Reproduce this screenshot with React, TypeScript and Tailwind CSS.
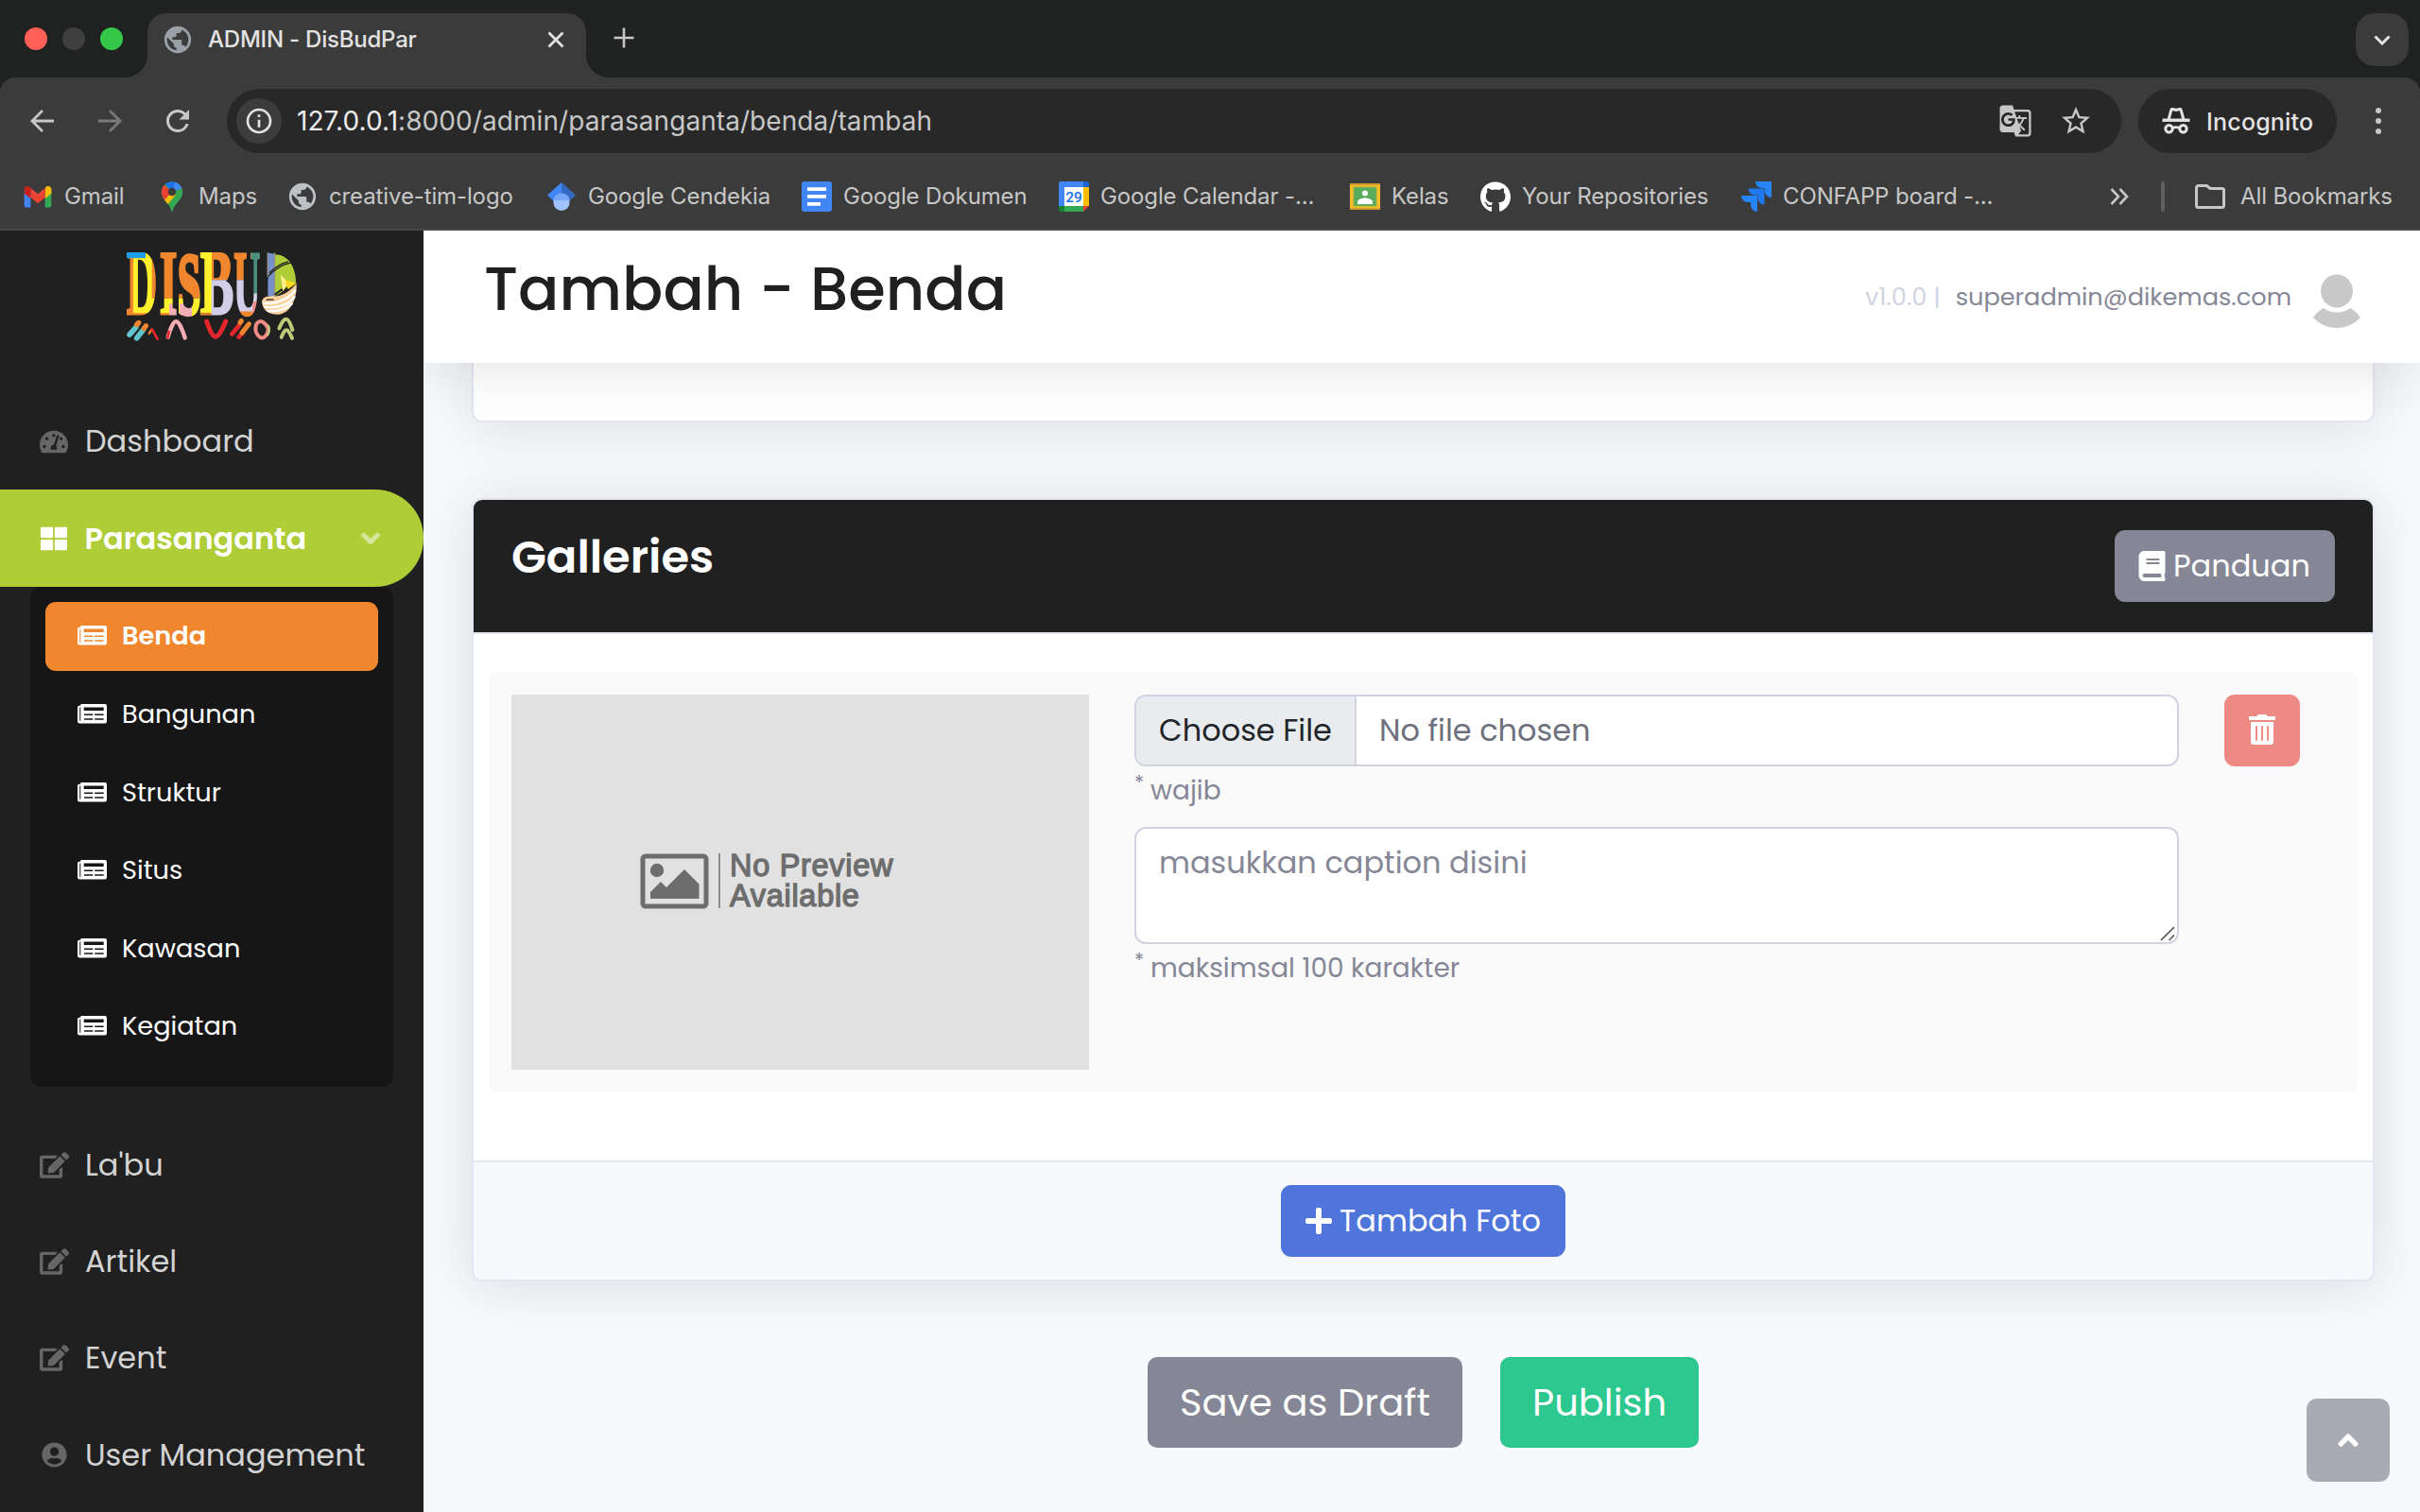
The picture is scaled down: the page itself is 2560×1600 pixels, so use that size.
import type { ReactNode } from "react";
import {
  FaAngleDown,
  FaAngleUp,
  FaBook,
  FaEdit,
  FaGithub,
  FaPlus,
  FaTachometerAlt,
  FaThLarge,
  FaTrashAlt,
  FaUserCircle,
} from "react-icons/fa";
import { MdGTranslate, MdInfoOutline, MdPublic, MdRefresh, MdStarOutline } from "react-icons/md";

/* ---------- browser icons ---------- */

function GmailIcon() {
  return (
    <svg viewBox="0 0 30 24" className="h-[23px] w-[30px]">
      <path d="M0 4v17a2.500 2.500 0 0 0 2.500 2.500H7V9z" fill="#4285f4" />
      <path d="M30 4v17a2.500 2.500 0 0 1-2.500 2.500H23V9z" fill="#34a853" />
      <path d="M7 3v10.500L0 8V3.500C0 .3 3.600-1 6 .8z" fill="#c5221f" />
      <path d="M23 3v10.500L30 8V3.500C30 .3 26.400-1 24 .8z" fill="#fbbc04" />
      <path d="M7 2l8 6.500L23 2v10.500L15 19 7 12.500z" fill="#ea4335" />
    </svg>
  );
}

function MapsIcon() {
  return (
    <svg viewBox="0 0 24 32" className="h-[32px] w-[24px]">
      <clipPath id="pin">
        <path d="M12 .5C5.600.5.8 5.400.8 11.500c0 3.500 1.600 6 3.700 8.800 2.800 3.700 5.300 5.200 6.500 10.200.4 1.700 1.600 1.700 2 0 1.200-5 3.700-6.500 6.500-10.200 2.100-2.800 3.700-5.300 3.700-8.800C23.200 5.400 18.400.5 12 .5z" />
      </clipPath>
      <g clipPath="url(#pin)">
        <path d="M0 0h24v32H0z" fill="#34a853" />
        <path d="M12 11L24 0H8z" fill="#4285f4" />
        <path d="M12 11L4 2 8-2h8z" fill="#1a73e8" />
        <path d="M12 11L16 0l8-2v9z" fill="#4285f4" />
        <path d="M12 11L0 24V0l4 4z" fill="#ea4335" />
        <path d="M12 11L2 22l4 4L16 14z" fill="#fbbc04" />
      </g>
      <circle cx="12" cy="11" r="4.200" fill="#3b3b3b" />
    </svg>
  );
}

function ScholarIcon() {
  return (
    <svg viewBox="0 0 32 32" className="size-[32px]">
      <path d="M16 1L1 14.500l7.500 7h7.500z" fill="#4285f4" />
      <path d="M16 1l15 13.500-7.500 7H16z" fill="#356ac3" />
      <path d="M7.500 20a8.500 7 0 0 1 17 0v2.500a8.500 8.500 0 0 1-17 0z" fill="#a0c3ff" />
      <path d="M7.500 20a8.500 7.500 0 0 1 17 0z" fill="#76a7fa" />
    </svg>
  );
}

function DocsIcon() {
  return (
    <svg viewBox="0 0 32 32" className="size-[32px]">
      <rect width="32" height="32" rx="3" fill="#4285f4" />
      <path d="M6 6.200h20v3.800H6zM6 14h20v3.800H6zM6 22h14v3.800H6z" fill="#fff" />
    </svg>
  );
}

function CalendarIcon() {
  return (
    <svg viewBox="0 0 32 32" className="size-[32px]">
      <path d="M2 0h24v6H6v20H0V2a2 2 0 0 1 2-2z" fill="#4285f4" />
      <path d="M26 0h4a2 2 0 0 1 2 2v4h-6z" fill="#1967d2" />
      <path d="M26 6h6v20h-6z" fill="#fbbc04" />
      <path d="M6 26h20v6H6z" fill="#34a853" />
      <path d="M0 26h6v6H2a2 2 0 0 1-2-2z" fill="#188038" />
      <path d="M26 26h6l-6 6z" fill="#ea4335" />
      <path d="M6 6h20v20H6z" fill="#fff" />
      <text x="16" y="21.500" textAnchor="middle" fontSize="15.500" fontWeight="500" fontFamily="Roboto" fill="#1a73e8">29</text>
    </svg>
  );
}

function ClassroomIcon() {
  return (
    <svg viewBox="0 0 32 28" className="h-[28px] w-[32px]">
      <rect width="32" height="28" rx="1" fill="#fbbc2c" />
      <path d="M0 0h32v2H0zM0 26h32v2H0z" fill="#cf9f2c" />
      <path d="M4 4h24v20H4z" fill="#5aab5e" />
      <path d="M4 4h24v20H4z" fill="none" stroke="#8fb548" />
      <circle cx="16" cy="10.500" r="3" fill="#fff" />
      <path d="M8 22v-2c0-3 4-4.500 8-4.500s8 1.500 8 4.500v2z" fill="#fff" />
    </svg>
  );
}

function JiraIcon() {
  return (
    <svg viewBox="0 0 32 32" className="size-[32px]">
      <path d="M15 0h17v17c-4 0-7-3-7-7V7h-3c-4 0-7-3-7-7z" fill="#2684ff" />
      <path d="M7.500 7.500h17v17c-4 0-7-3-7-7v-3h-3c-4 0-7-3-7-7z" fill="#1f78f0" />
      <path d="M0 15h17v17c-4 0-7-3-7-7v-3H7c-4 0-7-3-7-7z" fill="#2684ff" />
    </svg>
  );
}

function IncognitoIcon() {
  return (
    <svg viewBox="0 0 30 28" className="h-[28px] w-[30px]" fill="none" stroke="#e3e3e3" strokeWidth="2.600">
      <path d="M.5 13.200h29" strokeWidth="3.400" />
      <path d="M7 13L9.800 2.300c.2-.7.8-1 1.500-.8l3.700 1 3.700-1c.7-.2 1.300.1 1.500.8L23 13" strokeWidth="3" />
      <circle cx="7.500" cy="22.300" r="3.700" strokeWidth="3" />
      <circle cx="22.500" cy="22.300" r="3.700" strokeWidth="3" />
      <path d="M11 21.800c2.500-1.500 5.500-1.500 8 0" />
    </svg>
  );
}

function NewspaperIcon() {
  return (
    <svg viewBox="0 0 31 21" className="h-[21px] w-[31px] shrink-0" fill="currentColor">
      <path
        fillRule="evenodd"
        d="M4.500 0H29a2 2 0 0 1 2 2v16.500a2 2 0 0 1-2 2H2.500a2.500 2.500 0 0 1-2.500-2.500V3.500A1.800 1.800 0 0 1 1.800 1.700H3C3.200.7 3.600 0 4.500 0zM2.300 3.500v14.200h1V3.500zM6.700 3.400v3.500h21V3.400zM7 10.600v1.500h9.300v-1.500zM18.200 10.600v1.500h9.500v-1.500zM7 15.300v1.500h9.300v-1.500zM18.200 15.300v1.500h9.500v-1.500z"
      />
    </svg>
  );
}

/* ---------- sidebar logo ---------- */

function Logo() {
  return (
    <svg viewBox="402 81 540 281" className="h-[94px] w-[180px]">
      <defs>
        <mask id="letters" maskUnits="userSpaceOnUse" x="395" y="75" width="550" height="215">
          <g fill="#fff" stroke="#fff" fontFamily="Liberation Serif" fontWeight="700" fontSize="290" strokeWidth="9">
            <text transform="translate(401 276) scale(.465 1)">D</text>
            <text transform="translate(506 276) scale(.5 1)">I</text>
            <text transform="translate(563 275) scale(.46 .97)" strokeWidth="14">S</text>
            <text transform="translate(635 276) scale(.55 1)">B</text>
            <text transform="translate(742 277) scale(.4 1)">U</text>
          </g>
        </mask>
      </defs>
      <g mask="url(#letters)">
        <path d="M395 75h107v210H395z" fill="#f0862d" />
        <path d="M395 75h67v24h-67z" fill="#1e9fe8" />
        <path d="M423 99h39V75h20v152h20v46h-79z" fill="#fff02e" />
        <path d="M503 75h131v152H503z" fill="#f0862d" />
        <path d="M503 227h131v58H503z" fill="#fff02e" />
        <path d="M537 243h26v42h-26zM570 243h39v42h-39z" fill="#f2aeb4" />
        <path d="M503 273h34v12h-34z" fill="#f0862d" />
        <path d="M634 75h38v198h-38z" fill="#fff02e" />
        <path d="M634 273h38v12h-38z" fill="#f0862d" />
        <path d="M672 75h128v93H672z" fill="#f0862d" />
        <path d="M671 168h155v117H671z" fill="#d3cee7" />
        <path d="M797 75h32v136h-32z" fill="#4a8f80" />
        <path d="M802 237h27v48h-27z" fill="#f08a84" />
        <path d="M741 268h61v17h-61z" fill="#f0862d" />
      </g>
      <path d="M850 82l22 4v136l-22-4z" fill="#7590cb" />
      <path d="M872 87c42 0 66 38 67 88l-32 24-35 22z" fill="#aecd37" />
      <path d="M850 82v76M871 82v150" stroke="#8f8f94" strokeWidth="5" />
      <path d="M851 157c22-24 44-38 72-43M855 146c20-20 38-32 60-36" stroke="#202020" strokeWidth="4" fill="none" />
      <path d="M848 160l-12 60M872 215l22-16 4 6 18-14 2 8 24-20" stroke="#202020" strokeWidth="6" fill="none" />
      <path d="M890 152l24 22-16 32z" fill="#fdf08a" />
      <path d="M904 168l38 10-28 20z" fill="#fdd81f" />
      <path d="M831 238c2-18 22-20 44-18 28-4 46-18 66-40 2 50-20 98-62 98-28 0-46-16-48-40z" fill="#fbd2a0" />
      <path d="M834 242c50 4 82-14 104-42M838 254c46 6 78-8 98-34M848 266c34 4 60-4 80-24" stroke="#fff" strokeWidth="7" fill="none" />
      <path d="M845 231h24" stroke="#5b4a3a" strokeWidth="5" />
      <g fill="none" strokeLinecap="round">
        <path d="M411 342l21-24M434 353l20-26" stroke="#5fc4cf" strokeWidth="17" />
        <path d="M434 310l6-6M457 322l6-8" stroke="#f0862d" strokeWidth="16" />
        <path d="M473 338l8-12" stroke="#f0862d" strokeWidth="7" />
        <path d="M482 324l18 32" stroke="#e6252d" strokeWidth="8" />
        <path d="M533 350c8-30 18-50 26-50s20 26 28 52" stroke="#f2aeb4" strokeWidth="13" />
        <path d="M532 352l4-20" stroke="#e6252d" strokeWidth="8" />
        <path d="M656 300c8 24 18 48 28 48s22-24 32-48" stroke="#e6252d" strokeWidth="15" />
        <path d="M736 340l22-26M758 350l14-16" stroke="#e6252d" strokeWidth="14" />
        <path d="M762 304l4-6M768 336l22-28" stroke="#f0862d" strokeWidth="15" />
        <path d="M824 300c10-2 27 14 27 26s-10 26-19 26-21-14-21-26 4-24 13-26z" stroke="#f08a84" strokeWidth="12" />
        <path d="M852 314c3 8 3 20-2 28" stroke="#bccb78" strokeWidth="7" />
        <path d="M886 322c8-18 14-29 22-29s14 14 20 34M893 350c6-14 10-23 16-23s12 12 18 26" stroke="#bccb78" strokeWidth="12" />
      </g>
    </svg>
  );
}

/* ---------- browser chrome ---------- */

function TabStrip() {
  return (
    <div className="flex h-[82px] bg-[#202221]">
      <div className="flex h-[82px] w-[132px] shrink-0 items-center gap-[16px] pl-[26px]">
        <span className="size-[24px] rounded-full bg-[#fe5f57]" />
        <span className="size-[24px] rounded-full bg-[#3f3f3f]" />
        <span className="size-[24px] rounded-full bg-[#34c748]" />
      </div>
      <div className="flex items-end">
        <svg viewBox="0 0 24 24" className="size-[24px]"><path d="M24 0v24H0C13.300 24 24 13.300 24 0z" fill="#3b3b3b" /></svg>
        <div className="flex h-[68px] w-[464px] items-center rounded-t-[20px] bg-[#3b3b3b] pb-[12px] pl-[15px] pr-[20px]">
          <MdPublic className="size-[34px] text-[#9aa0a8]" />
          <span className="ml-[15px] flex-1 whitespace-nowrap text-[24px] font-medium leading-[34px] tracking-[-0.220px] text-[#e3e3e3]">ADMIN - DisBudPar</span>
          <svg viewBox="0 0 24 24" className="size-[24px]"><path d="M4.500 4.500l15 15M19.500 4.500l-15 15" stroke="#e3e3e3" strokeWidth="2.800" /></svg>
        </div>
        <svg viewBox="0 0 24 24" className="size-[24px]"><path d="M0 0v24h24C10.700 24 0 13.300 0 0z" fill="#3b3b3b" /></svg>
      </div>
      <div className="flex h-[80px] items-center pl-[5px]">
        <svg viewBox="0 0 22 22" className="size-[22px]"><path d="M11 .5v21M.5 11h21" stroke="#c7c7c7" strokeWidth="2.600" /></svg>
      </div>
      <div className="ml-auto mr-[12px] mt-[14px] flex size-[56px] items-center justify-center rounded-[20px] bg-[#3b3b3b]">
        <svg viewBox="0 0 18 11" className="h-[11px] w-[18px]"><path d="M1.500 1.500L9 9l7.500-7.500" fill="none" stroke="#e3e3e3" strokeWidth="3" /></svg>
      </div>
    </div>
  );
}

function Toolbar() {
  return (
    <div className="bg-[#202221]">
      <div className="flex h-[80px] items-center rounded-t-[16px] bg-[#3b3b3b] pt-[12px]">
        <div className="flex h-[68px] w-[240px] items-center pl-[32px]">
          <svg viewBox="0 0 26 26" className="size-[26px]"><path d="M25 13H2.500M13 2L2 13l11 11" fill="none" stroke="#c7c7c7" strokeWidth="2.800" /></svg>
          <svg viewBox="0 0 26 26" className="ml-[45px] size-[26px]"><path d="M1 13h22.500M13 2l11 11-11 11" fill="none" stroke="#7a7a7a" strokeWidth="2.800" /></svg>
          <MdRefresh className="ml-[41px] size-[36px] text-[#c7c7c7]" />
        </div>
        <div className="flex h-[68px] w-[2004px] items-center rounded-full bg-[#282828] pl-[10px] pr-[30px]">
          <span className="flex size-[48px] items-center justify-center rounded-full bg-[#3c3c3c]">
            <MdInfoOutline className="size-[32px] text-[#e3e3e3]" />
          </span>
          <span className="ml-[16px] flex-1 whitespace-nowrap text-[28px] leading-[40px] tracking-[0.070px] text-[#c7c7c7]">
            <span className="text-[#ececec]">127.0.0.1</span>:8000/admin/parasanganta/benda/tambah
          </span>
          <MdGTranslate className="size-[36px] text-[#c7c7c7]" />
          <MdStarOutline className="ml-[28px] size-[36px] text-[#c7c7c7]" />
        </div>
        <div className="ml-[18px] flex h-[68px] w-[210px] items-center rounded-full bg-[#282828] pl-[25px]">
          <IncognitoIcon />
          <span className="ml-[17px] pt-[2px] text-[25px] font-medium leading-[36px] tracking-[0.200px] text-[#e3e3e3]">Incognito</span>
        </div>
        <div className="ml-[41px] flex flex-col gap-[5px]">
          <span className="size-[6px] rounded-full bg-[#c7c7c7]" />
          <span className="size-[6px] rounded-full bg-[#c7c7c7]" />
          <span className="size-[6px] rounded-full bg-[#c7c7c7]" />
        </div>
      </div>
    </div>
  );
}

function Bookmark({ width, icon, label }: { width: string; icon: ReactNode; label: string }) {
  return (
    <div className={`flex shrink-0 items-center gap-[12px] ${width}`}>
      <span className="flex size-[32px] shrink-0 items-center justify-center">{icon}</span>
      <span className="whitespace-nowrap">{label}</span>
    </div>
  );
}

function BookmarksBar() {
  return (
    <div className="flex h-[82px] items-center border-b-2 border-[#4a4848] bg-[#3b3b3b] pl-[24px] pt-[12px] text-[24px] leading-[34px] tracking-[-0.120px] text-[#c7c7c7]">
      <Bookmark width="w-[142px]" icon={<GmailIcon />} label="Gmail" />
      <Bookmark width="w-[138px]" icon={<MapsIcon />} label="Maps" />
      <Bookmark width="w-[274px]" icon={<MdPublic className="size-[34px] shrink-0 text-[#bdc1c6]" />} label="creative-tim-logo" />
      <Bookmark width="w-[270px]" icon={<ScholarIcon />} label="Google Cendekia" />
      <Bookmark width="w-[272px]" icon={<DocsIcon />} label="Google Dokumen" />
      <Bookmark width="w-[308px]" icon={<CalendarIcon />} label="Google Calendar -..." />
      <Bookmark width="w-[138px]" icon={<ClassroomIcon />} label="Kelas" />
      <Bookmark width="w-[276px]" icon={<FaGithub className="size-[33px] text-white" />} label="Your Repositories" />
      <Bookmark width="w-[390px]" icon={<JiraIcon />} label="CONFAPP board -..." />
      <svg viewBox="0 0 20 18" className="h-[18px] w-[20px]"><path d="M1.500 1l7.500 8-7.500 8M10.500 1L18 9l-7.500 8" fill="none" stroke="#c7c7c7" strokeWidth="2.600" /></svg>
      <span className="ml-[34px] h-[32px] w-[4px] rounded-full bg-[#5f5f5f]" />
      <svg viewBox="0 0 32 26" className="ml-[32px] h-[26px] w-[32px]"><path d="M1.500 3.500v19a2 2 0 0 0 2 2h25a2 2 0 0 0 2-2v-16a2 2 0 0 0-2-2H16l-3.500-3h-9a2 2 0 0 0-2 2z" fill="none" stroke="#c7c7c7" strokeWidth="3" /></svg>
      <span className="ml-[16px] whitespace-nowrap">All Bookmarks</span>
    </div>
  );
}

/* ---------- sidebar ---------- */

function NavItem({ icon, label }: { icon: ReactNode; label: string }) {
  return (
    <div className="flex h-[102.400px] items-center pl-[41px] text-[32px] leading-[48px] text-[#d3d3d3]">
      <span className="flex w-[32px] justify-center text-[#666]">{icon}</span>
      <span className="ml-[17px] whitespace-nowrap">{label}</span>
    </div>
  );
}

function SubItem({ label, active }: { label: string; active?: boolean }) {
  return (
    <div
      className={
        "mb-[9.600px] flex h-[73px] items-center rounded-[11px] pb-[2px] pl-[34px] text-[27.200px] leading-[40px] text-white " +
        (active ? "bg-[#f0862d] font-semibold" : "")
      }
    >
      <NewspaperIcon />
      <span className="ml-[16px] whitespace-nowrap pt-[1px]">{label}</span>
    </div>
  );
}

function Sidebar() {
  return (
    <aside className="flex h-full w-[448px] shrink-0 flex-col bg-[#202020] font-['Poppins','Inter',sans-serif]">
      <div className="flex h-[172px] justify-center pt-[23px]">
        <Logo />
      </div>
      <NavItem icon={<FaTachometerAlt className="size-[27px] w-[30px]" />} label="Dashboard" />
      <div className="flex h-[103px] shrink-0 items-center rounded-r-[51px] bg-[#aecd37] pl-[41px] pr-[45px] text-[32px] font-semibold leading-[48px] text-white">
        <span className="flex w-[32px] justify-center"><FaThLarge className="size-[28px]" /></span>
        <span className="ml-[16.500px] flex-1">Parasanganta</span>
        <FaAngleDown className="size-[32px] w-[22px] text-white/50" />
      </div>
      <div className="mx-[32px] h-[529px] shrink-0 rounded-[12px] bg-[#161616] px-[16px] pt-[16px]">
        <SubItem active label="Benda" />
        <SubItem label="Bangunan" />
        <SubItem label="Struktur" />
        <SubItem label="Situs" />
        <SubItem label="Kawasan" />
        <SubItem label="Kegiatan" />
      </div>
      <div className="mt-[31px] shrink-0">
        <NavItem icon={<FaEdit className="h-[28px] w-[31px]" />} label="La'bu" />
        <NavItem icon={<FaEdit className="h-[28px] w-[31px]" />} label="Artikel" />
        <NavItem icon={<FaEdit className="h-[28px] w-[31px]" />} label="Event" />
        <NavItem icon={<FaUserCircle className="size-[27px]" />} label="User Management" />
      </div>
    </aside>
  );
}

/* ---------- page ---------- */

function PageHeader() {
  return (
    <header className="relative z-10 flex h-[140px] shrink-0 items-start bg-white pl-[64px] pr-[63px] shadow-[0_4.800px_56px_0_rgba(58,59,69,0.150)]">
      <h1 className="pt-[17px] text-[64px] font-medium leading-[90px] text-[#202020]">Tambah - Benda</h1>
      <div className="ml-auto flex h-[140px] items-center text-[25.600px] leading-[40px]">
        <span className="whitespace-nowrap text-[#d1d3e2]">v1.0.0 |</span>
        <span className="ml-[16px] whitespace-nowrap text-[#858796]">superadmin@dikemas.com</span>
        <svg viewBox="0 0 50 57" className="ml-[23px] mt-[8px] h-[57px] w-[50px]" fill="#c8c8c8">
          <ellipse cx="25" cy="18" rx="17" ry="17.500" />
          <path d="M11 36c8 6 20 6 28 0 4 2 8 5.500 11 10-6 6.500-15 11-25 11S6 52.500 0 46c3-4.500 7-8 11-10z" />
        </svg>
      </div>
    </header>
  );
}

function NoPreview() {
  return (
    <div className="flex h-[397px] w-[611px] shrink-0 bg-[#e1e1e1] pl-[136px] pt-[167px]">
      <svg viewBox="0 0 90 60" className="h-[60px] w-[90px] shrink-0">
        <rect x="3" y="4" width="67" height="53" rx="3" fill="none" stroke="#6d6d6d" strokeWidth="5" />
        <circle cx="18" cy="19" r="7.200" fill="#6d6d6d" />
        <path d="M11 49v-7l11-11 6 6 19-19 15.500 15.500V49z" fill="#6d6d6d" />
        <path d="M84 1v58" stroke="#8c8c8c" strokeWidth="2" />
      </svg>
      <div className="ml-[5px] mt-[-1px] font-['Liberation_Sans'] text-[32.500px] leading-[31.500px] tracking-[0.700px] text-[#6d6d6d] [-webkit-text-stroke:1.300px_#6d6d6d]">
        <div className="whitespace-nowrap">No Preview</div>
        <div className="whitespace-nowrap">Available</div>
      </div>
    </div>
  );
}

function Note({ children }: { children: ReactNode }) {
  return (
    <div className="flex h-[50px] items-start text-[28px] leading-[52px] text-[#858796]">
      <span className="w-[17px] text-[21px] leading-[36px]">*</span>
      <span className="whitespace-nowrap">{children}</span>
    </div>
  );
}

function GalleryRow() {
  return (
    <div className="mx-[16px] flex h-[445px] items-start rounded-[10px] bg-[#fafafa] pl-[24px] pt-[24px]">
      <NoPreview />
      <div className="ml-[48px] w-[1105px] shrink-0">
        <div className="flex h-[76px] overflow-hidden rounded-[12px] border-2 border-[#d1d3e2] bg-white text-[32px] leading-[72px]">
          <span className="w-[233px] whitespace-nowrap border-r-2 border-[#d1d3e2] bg-[#e9ecef] pl-[24px] text-[#212529]">Choose File</span>
          <span className="whitespace-nowrap pl-[24px] text-[#6e707e]">No file chosen</span>
        </div>
        <Note>wajib</Note>
        <div className="relative mt-[14px] h-[124px]">
          <textarea
            placeholder="masukkan caption disini"
            className="block h-[124px] w-full resize-none overflow-hidden rounded-[12px] border-2 border-[#d1d3e2] bg-white px-[24px] pt-[12px] text-[32px] leading-[48px] placeholder:text-[#858796]"
          />
          <svg viewBox="0 0 16 16" className="absolute bottom-[3px] right-[4px] size-[16px]"><path d="M1 15L15 1M9.500 15L15 9.500" stroke="#555" strokeWidth="1.600" /></svg>
        </div>
        <Note>maksimsal 100 karakter</Note>
      </div>
      <div className="ml-[48px] flex h-[76px] w-[80px] items-center justify-center rounded-[11px] bg-[#ed8a83] pb-[2px] text-white">
        <FaTrashAlt className="h-[32px] w-[28px]" />
      </div>
    </div>
  );
}

export default function App() {
  return (
    <div className="flex h-[1600px] w-[2560px] flex-col overflow-hidden bg-[#f8f9fc] font-['Inter',sans-serif]">
      <TabStrip />
      <Toolbar />
      <BookmarksBar />
      <div className="relative flex h-[1356px]">
        <Sidebar />
        <div className="flex min-w-0 flex-1 flex-col overflow-hidden font-['Poppins','Inter',sans-serif]">
          <PageHeader />
          <main className="flex flex-col pl-[51px] pr-[48px]">
            <div className="h-[63px] rounded-b-[11px] border-x-2 border-b-2 border-[#e3e6f0] bg-white shadow-[0_4.800px_56px_0_rgba(58,59,69,0.150)]" />
            <section className="mt-[80px] flex h-[829px] flex-col overflow-hidden rounded-[11px] border-2 border-[#e3e6f0] bg-white shadow-[0_4.800px_56px_0_rgba(58,59,69,0.150)]">
              <div className="flex h-[142px] items-start justify-between border-b-2 border-[#e3e6f0] bg-[#202020] pl-[40px] pr-[40px]">
                <h2 className="pt-[25px] text-[48px] font-semibold leading-[72px] text-white">Galleries</h2>
                <div className="mt-[32px] flex h-[76px] w-[233px] items-center rounded-[11px] bg-[#858796] pb-[1px] pl-[25px] text-[32px] leading-[48px] text-white">
                  <FaBook className="h-[32px] w-[29px]" />
                  <span className="ml-[8px]">Panduan</span>
                </div>
              </div>
              <div className="h-[557px] pt-[40px]">
                <GalleryRow />
              </div>
              <div className="flex flex-1 items-start justify-center border-t-2 border-[#e3e6f0] bg-[#f8f9fc] pt-[24px]">
                <div className="flex h-[76px] w-[301px] items-center rounded-[11px] bg-[#4f75db] pl-[26px] text-[32px] leading-[48px] text-white">
                  <FaPlus className="h-[32px] w-[28px]" />
                  <span className="ml-[8px] whitespace-nowrap">Tambah Foto</span>
                </div>
              </div>
            </section>
            <div className="mt-[80px] flex justify-center gap-[40px] text-[40px] leading-[60px] text-white">
              <div className="flex h-[96px] w-[333px] items-center justify-center rounded-[10px] bg-[#858796]">Save as Draft</div>
              <div className="flex h-[96px] w-[210px] items-center justify-center rounded-[10px] bg-[#2cc88f]">Publish</div>
            </div>
          </main>
        </div>
        <div className="absolute bottom-[32px] right-[32px] flex size-[88px] items-center justify-center rounded-[11px] bg-[#a9aab3] text-white">
          <FaAngleUp className="h-[34px] w-[22px]" />
        </div>
      </div>
    </div>
  );
}
